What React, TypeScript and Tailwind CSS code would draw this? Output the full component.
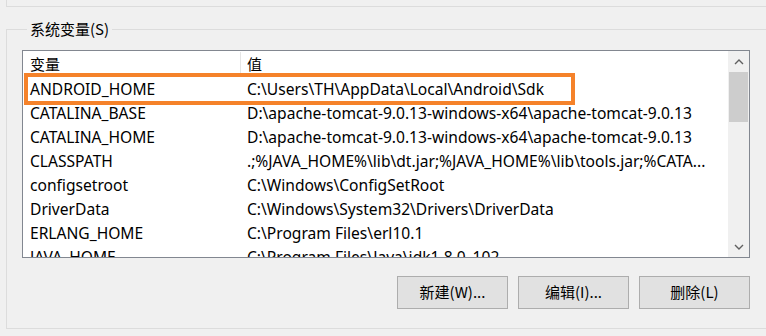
import React from "react";

const rows: [string, string][] = [
  ["ANDROID_HOME", "C:\\Users\\TH\\AppData\\Local\\Android\\Sdk"],
  ["CATALINA_BASE", "D:\\apache-tomcat-9.0.13-windows-x64\\apache-tomcat-9.0.13"],
  ["CATALINA_HOME", "D:\\apache-tomcat-9.0.13-windows-x64\\apache-tomcat-9.0.13"],
  ["CLASSPATH", ".;%JAVA_HOME%\\lib\\dt.jar;%JAVA_HOME%\\lib\\tools.jar;%CATA..."],
  ["configsetroot", "C:\\Windows\\ConfigSetRoot"],
  ["DriverData", "C:\\Windows\\System32\\Drivers\\DriverData"],
  ["ERLANG_HOME", "C:\\Program Files\\erl10.1"],
  ["JAVA_HOME", "C:\\Program Files\\Java\\jdk1.8.0_102"],
];

function Chevron({ up }: { up?: boolean }) {
  return (
    <svg width="10" height="6" viewBox="0 0 10 6" fill="none">
      <path
        d={up ? "M1 5 L5 1 L9 5" : "M1 1 L5 5 L9 1"}
        stroke="#606060"
        strokeWidth="1.4"
      />
    </svg>
  );
}

const cjk = { fontFamily: '"Noto Sans CJK SC", sans-serif' };

export default function App() {
  return (
    <div
      className="w-[766px] h-[336px] bg-[#f0f0f0] overflow-hidden text-[15px] text-black"
      style={{ fontFamily: '"Noto Sans", "Noto Sans CJK SC", sans-serif' }}
    >
      <div className="h-[7px] ml-[6px] mr-[-20px] border-l border-b border-[#dcdcdc]" />
      <fieldset className="mt-[12px] ml-[6px] mr-[-20px] border border-[#dcdcdc] pl-[15px] pt-[11px] pb-[19px]">
        <legend className="ml-[5px] px-[3px] leading-[20px]" style={cjk}>
          系统变量(S)
        </legend>
        <div className="relative w-[728px] h-[208px] border border-[#828790] bg-white flex">
          <div className="flex-1 overflow-hidden flex flex-col">
            <div className="flex h-[27px] shrink-0">
              <div className="w-[217px] flex items-center pl-[7px]" style={cjk}>
                变量
              </div>
              <div className="w-px my-[1px] bg-[#e5e5e5]" />
              <div className="flex-1 flex items-center pl-[6px]" style={cjk}>
                值
              </div>
            </div>
            {rows.map(([k, v]) => (
              <div
                key={k}
                className="flex h-[24px] shrink-0 items-center whitespace-nowrap text-[15.6px]"
              >
                <div className="w-[218px] pl-[7px] overflow-hidden">{k}</div>
                <div className="flex-1 pl-[6px] overflow-hidden">{v}</div>
              </div>
            ))}
          </div>
          <div className="w-[21px] bg-[#f0f0f0] flex flex-col">
            <div className="h-[21px] flex items-center justify-center">
              <Chevron up />
            </div>
            <div className="h-[50px] mx-[1px] bg-[#cdcdcd]" />
            <div className="flex-1" />
            <div className="h-[21px] flex items-center justify-center">
              <Chevron />
            </div>
          </div>
          <div className="absolute left-[1px] top-[22px] w-[551px] h-[32px] border-[4px] border-[#f5822a]" />
        </div>
        <div className="w-[728px] mt-[18px] flex justify-end gap-[10px]">
          {["新建(W)...", "编辑(I)...", "删除(L)"].map((t) => (
            <button
              key={t}
              className="w-[111px] h-[33px] bg-[#e1e1e1] border border-[#adadad] flex items-center justify-center"
              style={cjk}
            >
              {t}
            </button>
          ))}
        </div>
      </fieldset>
    </div>
  );
}
